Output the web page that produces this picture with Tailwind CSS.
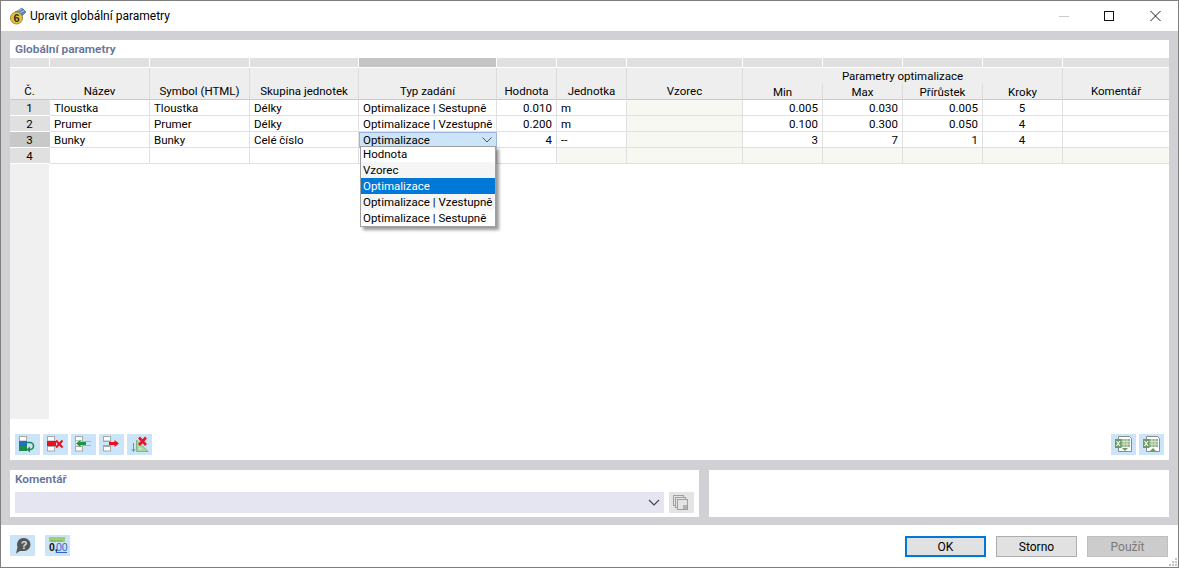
<!DOCTYPE html>
<html lang="cs">
<head>
<meta charset="UTF-8">
<title>Upravit globální parametry</title>
<script src="https://cdn.jsdelivr.net/npm/@tailwindcss/browser@4"></script>
</head>
<body class="bg-white">
<div class="w-[1179px] h-[568px] flex flex-col overflow-hidden border border-[#7f7f7f] bg-white text-[11.5px] leading-[16px] text-black font-['Roboto','Noto_Sans',sans-serif] relative">

  <!-- title bar -->
  <div class="h-[30px] flex items-center shrink-0 pl-[8px]">
    <svg width="18" height="18" viewBox="0 0 18 18" class="mr-[3px]">
      <path d="M6 5 L13 1 L17 5 L13 9 Z" fill="#5f86b5" stroke="#3c5f8c" stroke-width=".6"/>
      <path d="M8 4 L13 2 M9 6 L15 4" stroke="#c7d6e6" stroke-width=".7"/>
      <circle cx="7.5" cy="11" r="6" fill="#e8c33a" stroke="#8a7320" stroke-width=".8"/>
      <text x="7.5" y="15" font-size="11" font-weight="700" text-anchor="middle" fill="#2f2f2f" font-family="Liberation Sans">6</text>
    </svg>
    <span class="text-[12px]">Upravit globální parametry</span>
    <div class="ml-auto flex items-center">
      <svg width="46" height="30" viewBox="0 0 46 30"><path d="M19 15.5 H29" stroke="#c8c8c8"/></svg>
      <svg width="46" height="30" viewBox="0 0 46 30"><rect x="18.5" y="10.5" width="9" height="9" fill="none" stroke="#111"/></svg>
      <svg width="46" height="30" viewBox="0 0 46 30"><path d="M18.5 10 L28.5 20 M28.5 10 L18.5 20" stroke="#222" stroke-width="1"/></svg>
    </div>
  </div>

  <!-- main area -->
  <div class="h-[494px] shrink-0 bg-[#d0d0d5] px-[9px] pt-[9px] flex flex-col gap-[10px]">

    <section class="h-[420px] bg-white flex flex-col">
      <h2 class="h-[18px] pl-[5px] pt-[1px] font-semibold text-[#64749b] text-[11.8px]">Globální parametry</h2>

      <div class="grid grid-cols-[40px_100px_100px_109px_138px_60px_70px_116px_80px_80px_80px_80px_106px] grid-rows-[10px_16px_16px_16px_16px_16px_16px] [&>div]:whitespace-nowrap">
        <!-- strip above the header -->
        <div class="bg-[#e0e0e0] border-r border-b border-white"></div>
        <div class="bg-[#e0e0e0] border-r border-b border-white"></div>
        <div class="bg-[#e0e0e0] border-r border-b border-white"></div>
        <div class="bg-[#e0e0e0] border-r border-b border-white"></div>
        <div class="bg-[#c4c4c4] border-r border-b border-white"></div>
        <div class="bg-[#e0e0e0] border-r border-b border-white"></div>
        <div class="bg-[#e0e0e0] border-r border-b border-white"></div>
        <div class="bg-[#e0e0e0] border-r border-b border-white"></div>
        <div class="bg-[#e0e0e0] border-r border-b border-white"></div>
        <div class="bg-[#e0e0e0] border-r border-b border-white"></div>
        <div class="bg-[#e0e0e0] border-r border-b border-white"></div>
        <div class="bg-[#e0e0e0] border-r border-b border-white"></div>
        <div class="bg-[#e0e0e0] border-b border-white"></div>

        <!-- header -->
        <div class="row-span-2 bg-[#eeeeee] border-r border-b border-r-[#eeeeee] border-b-[#c8c8c8] flex items-end justify-center">Č.</div>
        <div class="row-span-2 bg-[#eeeeee] border-r border-b border-r-[#dcdcdc] border-b-[#c8c8c8] flex items-end justify-center">Název</div>
        <div class="row-span-2 bg-[#eeeeee] border-r border-b border-r-[#dcdcdc] border-b-[#c8c8c8] flex items-end justify-center">Symbol (HTML)</div>
        <div class="row-span-2 bg-[#eeeeee] border-r border-b border-r-[#dcdcdc] border-b-[#c8c8c8] flex items-end justify-center">Skupina jednotek</div>
        <div class="row-span-2 bg-[#eeeeee] border-r border-b border-r-[#dcdcdc] border-b-[#c8c8c8] flex items-end justify-center">Typ zadání</div>
        <div class="row-span-2 bg-[#eeeeee] border-r border-b border-r-[#dcdcdc] border-b-[#c8c8c8] flex items-end justify-center">Hodnota</div>
        <div class="row-span-2 bg-[#eeeeee] border-r border-b border-r-[#dcdcdc] border-b-[#c8c8c8] flex items-end justify-center">Jednotka</div>
        <div class="row-span-2 bg-[#eeeeee] border-r border-b border-r-[#dcdcdc] border-b-[#c8c8c8] flex items-end justify-center">Vzorec</div>
        <div class="col-span-4 bg-[#eeeeee] border-r border-r-[#dcdcdc] text-center">Parametry optimalizace</div>
        <div class="row-span-2 bg-[#eeeeee] border-b border-b-[#c8c8c8] flex items-end justify-center">Komentář</div>
        <div class="bg-[#eeeeee] border-r border-b border-r-[#dcdcdc] border-b-[#c8c8c8] text-center">Min</div>
        <div class="bg-[#eeeeee] border-r border-b border-r-[#dcdcdc] border-b-[#c8c8c8] text-center">Max</div>
        <div class="bg-[#eeeeee] border-r border-b border-r-[#dcdcdc] border-b-[#c8c8c8] text-center">Přírůstek</div>
        <div class="bg-[#eeeeee] border-r border-b border-r-[#dcdcdc] border-b-[#c8c8c8] text-center">Kroky</div>

        <!-- row 1 -->
        <div class="bg-[#e0e0e0] border-r border-b border-[#e0e0e0] border-b-white text-center">1</div>
        <div class="border-r border-b border-[#e0e0e0] pl-[4px]">Tloustka</div>
        <div class="border-r border-b border-[#e0e0e0] pl-[4px]">Tloustka</div>
        <div class="border-r border-b border-[#e0e0e0] pl-[4px]">Délky</div>
        <div class="border-r border-b border-[#e0e0e0] pl-[4px]">Optimalizace | Sestupně</div>
        <div class="border-r border-b border-[#e0e0e0] pr-[4px] text-right">0.010</div>
        <div class="border-r border-b border-[#e0e0e0] pl-[4px]">m</div>
        <div class="bg-[#f7f8f2] border-r border-b border-[#e0e0e0]"></div>
        <div class="border-r border-b border-[#e0e0e0] pr-[4px] text-right">0.005</div>
        <div class="border-r border-b border-[#e0e0e0] pr-[4px] text-right">0.030</div>
        <div class="border-r border-b border-[#e0e0e0] pr-[4px] text-right">0.005</div>
        <div class="border-r border-b border-[#e0e0e0] pr-[1px] text-center">5</div>
        <div class="border-b border-[#e0e0e0]"></div>

        <!-- row 2 -->
        <div class="bg-[#e0e0e0] border-r border-b border-[#e0e0e0] border-b-white text-center">2</div>
        <div class="border-r border-b border-[#e0e0e0] pl-[4px]">Prumer</div>
        <div class="border-r border-b border-[#e0e0e0] pl-[4px]">Prumer</div>
        <div class="border-r border-b border-[#e0e0e0] pl-[4px]">Délky</div>
        <div class="border-r border-b border-[#e0e0e0] pl-[4px]">Optimalizace | Vzestupně</div>
        <div class="border-r border-b border-[#e0e0e0] pr-[4px] text-right">0.200</div>
        <div class="border-r border-b border-[#e0e0e0] pl-[4px]">m</div>
        <div class="bg-[#f7f8f2] border-r border-b border-[#e0e0e0]"></div>
        <div class="border-r border-b border-[#e0e0e0] pr-[4px] text-right">0.100</div>
        <div class="border-r border-b border-[#e0e0e0] pr-[4px] text-right">0.300</div>
        <div class="border-r border-b border-[#e0e0e0] pr-[4px] text-right">0.050</div>
        <div class="border-r border-b border-[#e0e0e0] pr-[1px] text-center">4</div>
        <div class="border-b border-[#e0e0e0]"></div>

        <!-- row 3, the open combo -->
        <div class="bg-[#c8c8c8] border-r border-b border-[#c8c8c8] border-b-white text-center">3</div>
        <div class="border-r border-b border-[#e0e0e0] pl-[4px]">Bunky</div>
        <div class="border-r border-b border-[#e0e0e0] pl-[4px]">Bunky</div>
        <div class="border-r border-b border-[#e0e0e0] pl-[4px]">Celé číslo</div>
        <div class="relative bg-[#cce4f7] border border-[#9fb4e6] pl-[3px] flex items-center">
          <span>Optimalizace</span>
          <svg width="10" height="6" viewBox="0 0 10 6" class="ml-auto mr-[4px]"><path d="M.5 .5 L5 5 L9.5 .5" fill="none" stroke="#555"/></svg>
          <ul class="absolute z-10 left-0 top-[13px] w-[136px] bg-white border border-[#a0a0a0] shadow-[3px_3px_3px_rgba(0,0,0,0.4)]">
            <li class="h-[15px] pl-[2px] leading-[14px]">Hodnota</li>
            <li class="h-[16px] pl-[2px] bg-[#f5f5f5]">Vzorec</li>
            <li class="h-[16px] pl-[2px] bg-[#0078d7] text-white">Optimalizace</li>
            <li class="h-[16px] pl-[2px] bg-[#f5f5f5]">Optimalizace | Vzestupně</li>
            <li class="h-[16px] pl-[2px]">Optimalizace | Sestupně</li>
          </ul>
        </div>
        <div class="border-r border-b border-[#e0e0e0] pr-[4px] text-right">4</div>
        <div class="border-r border-b border-[#e0e0e0] pl-[4px]">--</div>
        <div class="bg-[#f7f8f2] border-r border-b border-[#e0e0e0]"></div>
        <div class="border-r border-b border-[#e0e0e0] pr-[4px] text-right">3</div>
        <div class="border-r border-b border-[#e0e0e0] pr-[4px] text-right">7</div>
        <div class="border-r border-b border-[#e0e0e0] pr-[4px] text-right">1</div>
        <div class="border-r border-b border-[#e0e0e0] pr-[1px] text-center">4</div>
        <div class="border-b border-[#e0e0e0]"></div>

        <!-- row 4 -->
        <div class="bg-[#e0e0e0] border-r border-b border-[#e0e0e0] border-b-white text-center">4</div>
        <div class="border-r border-b border-[#e0e0e0]"></div>
        <div class="border-r border-b border-[#e0e0e0]"></div>
        <div class="border-r border-b border-[#e0e0e0]"></div>
        <div class="border-r border-b border-[#e0e0e0]"></div>
        <div class="border-r border-b border-[#e0e0e0]"></div>
        <div class="bg-[#f7f8f2] border-r border-b border-[#e0e0e0]"></div>
        <div class="bg-[#f7f8f2] border-r border-b border-[#e0e0e0]"></div>
        <div class="bg-[#f7f8f2] border-r border-b border-[#e0e0e0]"></div>
        <div class="bg-[#f7f8f2] border-r border-b border-[#e0e0e0]"></div>
        <div class="bg-[#f7f8f2] border-r border-b border-[#e0e0e0]"></div>
        <div class="bg-[#f7f8f2] border-r border-b border-[#e0e0e0]"></div>
        <div class="bg-[#f7f8f2] border-b border-[#e0e0e0]"></div>
      </div>

      <!-- empty rest of the row header column -->
      <div class="w-[39px] flex-1 bg-[#f0f0f0]"></div>

      <!-- table toolbar -->
      <div class="flex items-center justify-between mt-[15px] mb-[5px] px-[5px] h-[21px]">
        <div class="flex gap-[3px]">
          <button class="w-[25px] h-[21px] bg-[#cce4f7]">
            <svg width="25" height="21" viewBox="0 0 25 21">
              <rect x="4.5" y="2.5" width="7" height="4.5" fill="#fff" stroke="#a8a8a8"/>
              <rect x="4" y="7" width="8" height="5" fill="#1f6fc4"/>
              <rect x="4" y="12" width="8" height="5" fill="#1c8a4a"/>
              <path d="M12 8.5 H15 A3.4 3.4 0 0 1 15 15.5 H14" fill="none" stroke="#1c8a4a" stroke-width="1.6"/>
              <path d="M15 12.5 L11.5 15.5 L15 18.5 Z" fill="#1c8a4a"/>
            </svg>
          </button>
          <button class="w-[25px] h-[21px] bg-[#cce4f7]">
            <svg width="25" height="21" viewBox="0 0 25 21">
              <rect x="4.5" y="2.5" width="7" height="4.5" fill="#fff" stroke="#a8a8a8"/>
              <rect x="4.5" y="12.5" width="7" height="4.5" fill="#fff" stroke="#a8a8a8"/>
              <rect x="4" y="7" width="9" height="5" fill="#e8101c"/>
              <path d="M13 6.5 L19.5 13.5 M19.5 6.5 L13 13.5" stroke="#e8101c" stroke-width="2"/>
            </svg>
          </button>
          <button class="w-[25px] h-[21px] bg-[#cce4f7]">
            <svg width="25" height="21" viewBox="0 0 25 21">
              <rect x="4.5" y="2.5" width="7" height="4.5" fill="#fff" stroke="#a8a8a8"/>
              <rect x="4.5" y="7" width="7" height="5" fill="#fff" stroke="#9cc9ac"/>
              <rect x="4.5" y="12.5" width="7" height="4.5" fill="#fff" stroke="#a8a8a8"/>
              <path d="M12 7.5 H20 M12 11.5 H20" stroke="#8ccaa4"/>
              <path d="M5 9.5 L9.5 6 V8 H15 V11 H9.5 V13 Z" fill="#149a3c"/>
            </svg>
          </button>
          <button class="w-[25px] h-[21px] bg-[#cce4f7]">
            <svg width="25" height="21" viewBox="0 0 25 21">
              <rect x="4.5" y="2.5" width="7" height="4.5" fill="#fff" stroke="#a8a8a8"/>
              <rect x="4.5" y="12.5" width="7" height="4.5" fill="#fff" stroke="#a8a8a8"/>
              <path d="M4 7.5 H12 M4 11.5 H12" stroke="#e08a90"/>
              <path d="M20 9.5 L15.5 6 V8 H10 V11 H15.5 V13 Z" fill="#e8101c"/>
            </svg>
          </button>
          <button class="w-[25px] h-[21px] bg-[#cce4f7]">
            <svg width="25" height="21" viewBox="0 0 25 21">
              <path d="M6.5 9 V17.5 M4.8 15 L6.5 17.5 L8.2 15" fill="none" stroke="#6f8fc0"/>
              <path d="M9.5 17.5 V6 L21 17.5 Z" fill="#a9d99a" stroke="#7fb57f"/>
              <path d="M12 15.5 V12.5 L15.5 15.5 Z" fill="#cce4f7"/>
              <path d="M12 3.5 L19 11 M19 3.5 L12 11" stroke="#e0182c" stroke-width="2.6"/>
            </svg>
          </button>
        </div>
        <div class="flex gap-[3px]">
          <button class="w-[25px] h-[21px] bg-[#cce4f7]">
            <svg width="25" height="21" viewBox="0 0 25 21">
              <path d="M7.5 2.5 H18.5 L20.5 4.5 V17.5 H7.5 Z" fill="#fff" stroke="#8a8a8a"/>
              <rect x="10" y="5" width="9" height="8" fill="#8fb58a"/>
              <path d="M10 7.5 H19 M10 10 H19 M13 5 V13 M16 5 V13" stroke="#e4efe0" stroke-width=".8"/>
              <rect x="4" y="5" width="6.5" height="9" fill="#6b9a66"/>
              <path d="M5.5 7 L9 12 M9 7 L5.5 12" stroke="#fff" stroke-width="1.1"/>
              <path d="M11 14 H17 L14 17 Z" fill="#6b9a66"/>
            </svg>
          </button>
          <button class="w-[25px] h-[21px] bg-[#cce4f7]">
            <svg width="25" height="21" viewBox="0 0 25 21">
              <path d="M7.5 2.5 H18.5 L20.5 4.5 V17.5 H7.5 Z" fill="#fff" stroke="#8a8a8a"/>
              <rect x="10" y="5" width="9" height="8" fill="#8fb58a"/>
              <path d="M10 7.5 H19 M10 10 H19 M13 5 V13 M16 5 V13" stroke="#e4efe0" stroke-width=".8"/>
              <rect x="4" y="5" width="6.5" height="9" fill="#6b9a66"/>
              <path d="M5.5 7 L9 12 M9 7 L5.5 12" stroke="#fff" stroke-width="1.1"/>
              <path d="M11 17 H17 L14 14 Z" fill="#6b9a66"/>
            </svg>
          </button>
        </div>
      </div>
    </section>

    <!-- comment row -->
    <div class="h-[47px] flex gap-[10px]">
      <section class="w-[689px] bg-white px-[5px] flex flex-col">
        <h2 class="h-[22px] pt-[1px] font-semibold text-[#64749b] text-[11.8px]">Komentář</h2>
        <div class="flex gap-[5px]">
          <div class="w-[649px] h-[21px] bg-[#e4e5f0] flex items-center justify-end pr-[3px]">
            <svg width="12" height="7" viewBox="0 0 12 7" class="mr-[1px]"><path d="M1 1 L6 6 L11 1" fill="none" stroke="#444" stroke-width="1.2"/></svg>
          </div>
          <button class="w-[25px] h-[21px] bg-[#e4e4e4]">
            <svg width="25" height="21" viewBox="0 0 25 21">
              <rect x="4.5" y="3.5" width="10" height="10" fill="none" stroke="#a0a0a0"/>
              <rect x="6.5" y="5.5" width="10" height="10" fill="#e4e4e4" stroke="#a0a0a0"/>
              <rect x="8.5" y="7.5" width="10" height="10" fill="#e4e4e4" stroke="#a0a0a0"/>
              <rect x="14" y="13" width="4" height="4" fill="#b0b0b0"/>
            </svg>
          </button>
        </div>
      </section>
      <section class="flex-1 bg-white"></section>
    </div>
  </div>

  <!-- footer -->
  <div class="flex-1 flex items-start pl-[9px] pr-[10px] pt-[10px]">
    <button class="w-[25px] h-[21px] bg-[#cce4f7]">
      <svg width="25" height="21" viewBox="0 0 25 21">
        <path d="M14 3 A6.5 6.5 0 0 1 14 16 H10 L6 18.5 L7.5 12 A6.5 6.5 0 0 1 14 3 Z" fill="#555"/>
        <text x="14" y="14" font-size="11" font-weight="700" text-anchor="middle" fill="#cce4f7" font-family="Liberation Sans">?</text>
      </svg>
    </button>
    <button class="w-[25px] h-[21px] bg-[#cce4f7] ml-[10px]">
      <svg width="25" height="21" viewBox="0 0 25 21">
        <rect x="4" y="2" width="16" height="5" fill="#9ccf6e"/>
        <path d="M7 5 V7 M10 5 V7 M13 5 V7 M16 5 V7" stroke="#5f8f3f" stroke-width=".7"/>
        <text x="4" y="16" font-size="10.5" font-weight="700" fill="#111" font-family="Liberation Sans">0,</text>
        <text x="11" y="16" font-size="10.5" fill="#2f62c8" font-family="Liberation Sans">00</text>
        <path d="M11 17.5 H22" stroke="#2f62c8"/>
      </svg>
    </button>
    <div class="ml-auto flex gap-[10px] mt-[1px]">
      <button class="w-[81px] h-[21px] bg-[#e1e1e1] border-2 border-[#0078d7] text-[12px] leading-[16px]">OK</button>
      <button class="w-[81px] h-[21px] bg-[#e1e1e1] border border-[#adadad] text-[12px] leading-[16px]">Storno</button>
      <button class="w-[81px] h-[21px] bg-[#cccccc] border border-[#bfbfbf] text-[#7a7a7a] text-[12px] leading-[16px]">Použít</button>
    </div>
  </div>

  <!-- resize grip -->
  <svg width="10" height="10" viewBox="0 0 10 10" class="absolute right-[0px] bottom-[0px]">
    <path d="M7 1 h2 v2 h-2 Z M7 4 h2 v2 h-2 Z M4 4 h2 v2 h-2 Z M7 7 h2 v2 h-2 Z M4 7 h2 v2 h-2 Z M1 7 h2 v2 h-2 Z" fill="#c4c4c4"/>
  </svg>
</div>
</body>
</html>
